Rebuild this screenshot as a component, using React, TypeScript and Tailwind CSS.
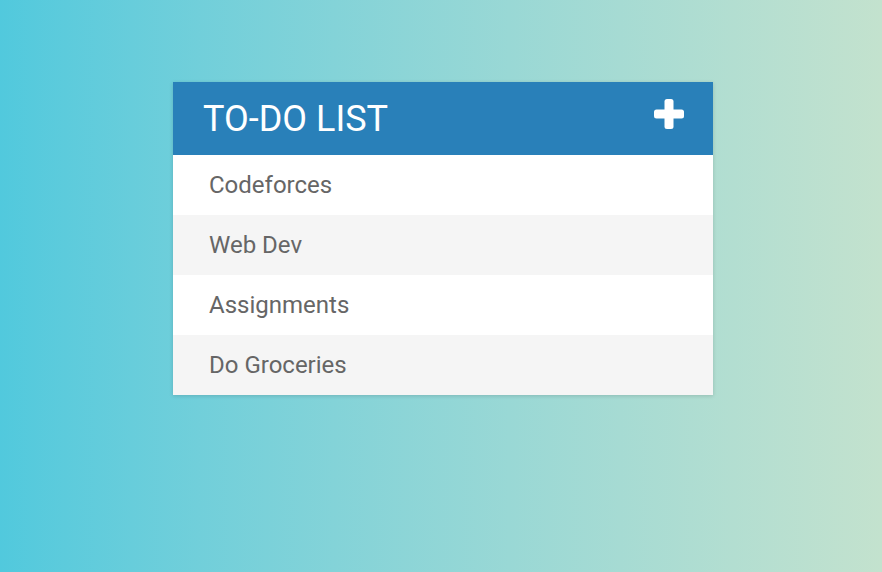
import React from "react";

const items = ["Codeforces", "Web Dev", "Assignments", "Do Groceries"];

export default function App() {
  return (
    <div
      className="w-[882px] h-[572px] bg-gradient-to-r from-[#51c9dd] to-[#c3e2ce] pt-[82px] pl-[173px]"
      style={{ fontFamily: "Roboto, 'Liberation Sans', sans-serif" }}
    >
      <div className="w-[540px] bg-white shadow-[0_1px_4px_rgba(0,0,0,0.15)]">
        <div className="h-[73px] bg-[#2980b9] flex items-center justify-between pl-[30px] pr-[29px]">
          <h1 className="text-white text-[36px] font-normal leading-none">TO-DO LIST</h1>
          <svg width="30" height="30" viewBox="0 0 30 30" className="mt-[-9px]">
            <rect x="0" y="10.5" width="30" height="9" rx="2.5" fill="white" />
            <rect x="10.5" y="0" width="9" height="30" rx="2.5" fill="white" />
          </svg>
        </div>
        <ul>
          {items.map((t, i) => (
            <li
              key={t}
              className={`h-[60px] flex items-center pl-[36px] text-[24px] text-[#666666] ${
                i % 2 === 1 ? "bg-[#f5f5f5]" : "bg-white"
              }`}
            >
              {t}
            </li>
          ))}
        </ul>
      </div>
    </div>
  );
}
